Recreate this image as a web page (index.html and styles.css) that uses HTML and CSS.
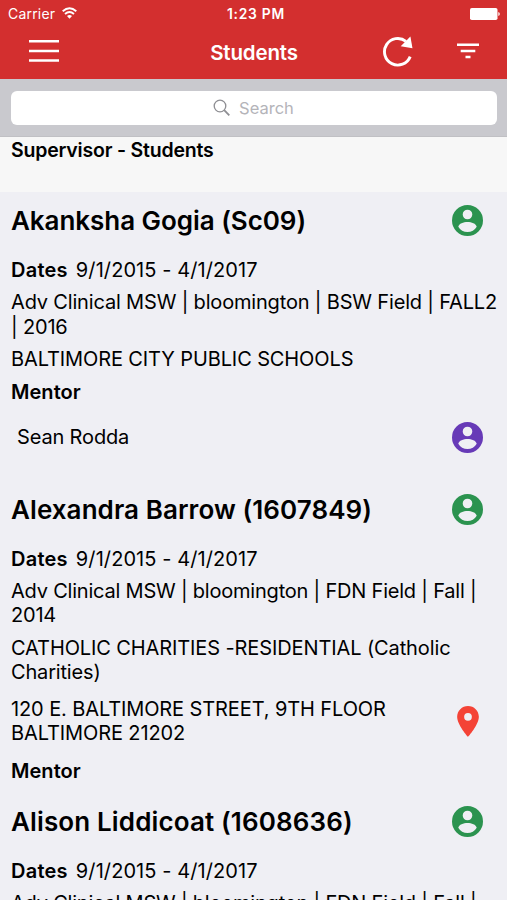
FILE: index.html
```html
<!DOCTYPE html>
<html lang="en">
<head>
<meta charset="utf-8">
<title>Students</title>
<link rel="stylesheet" href="styles.css">
</head>
<body>
<svg class="defs" aria-hidden="true">
  <symbol id="person" viewBox="0 0 31 31"><path fill-rule="evenodd" d="M15.500 0a15.500 15.500 0 1 1 0 31 15.500 15.500 0 0 1 0-31zM15.500 4.700a4.800 4.800 0 1 0 0 9.600 4.800 4.800 0 0 0 0-9.600zM6.300 21.700C8.200 25.200 11.600 27 15.500 27S22.800 25.200 24.700 21.700C24.100 18.400 19.500 16.900 15.500 16.900S6.900 18.400 6.300 21.700z"/></symbol>
  <symbol id="pin" viewBox="5 2 14 20"><path d="M12 2C8.130 2 5 5.130 5 9c0 5.250 7 13 7 13s7-7.750 7-13c0-3.870-3.130-7-7-7zm0 9.500a2.500 2.500 0 1 1 0-5 2.500 2.500 0 0 1 0 5z"/></symbol>
</svg>
<header class="top">
  <div class="status">
    <div class="carrier"><span class="carrier-name">Carrier</span>
      <svg class="wifi" viewBox="0 0 15 12"><path d="M0.700 4.300Q7.500-1.600 14.300 4.300M3 7Q7.500 3.200 12 7" fill="none" stroke="#fff" stroke-width="1.900"/><path d="M5 9Q7.500 7 10 9L7.500 11.700z" fill="#fff"/></svg>
    </div>
    <span class="clock">1:23 PM</span>
    <svg class="battery" viewBox="0 0 30 12"><rect width="27.500" height="12" rx="1.800" fill="#fff"/><path d="M28.300 4Q29.800 4.500 29.800 6T28.300 8z" fill="#fff"/></svg>
  </div>
  <nav class="bar">
    <svg class="menu" viewBox="0 0 30 24"><path d="M0 2.300h30M0 11.900h30M0 21.500h30" stroke="#fff" stroke-width="2.500"/></svg>
    <h1 class="title">Students</h1>
    <div class="actions">
      <svg class="refresh" viewBox="0 0 32 32"><path d="M28.200 21.600A13.300 13.300 0 1 1 24 6.300" fill="none" stroke="#fff" stroke-width="2.900"/><path d="M28.400 1.500L30.500 13.300 18.700 11.200z" fill="#fff"/></svg>
      <svg class="filter" viewBox="0 0 24 18"><path d="M1 2.800h22M4.700 9h14.600M9.500 15h5" stroke="#fff" stroke-width="2.400"/></svg>
    </div>
  </nav>
</header>
<div class="search">
  <div class="field">
    <svg class="glass" viewBox="0 0 18 18"><circle cx="7" cy="7" r="5.800" fill="none" stroke="#8e8e93" stroke-width="1.300"/><path d="M11.200 11.200L16.300 16.300" stroke="#8e8e93" stroke-width="1.800"/></svg>
    <span class="hint">Search</span>
  </div>
</div>
<h2 class="section"><span class="section-text">Supervisor - Students</span></h2>
<main class="list">
  <article class="card first">
    <div class="head"><h3 class="name n1">Akanksha Gogia (Sc09)</h3><svg class="icon green"><use href="#person"/></svg></div>
    <p class="line dates"><b>Dates</b><span>9/1/2015 - 4/1/2017</span></p>
    <p class="line">Adv Clinical MSW | bloomington | BSW Field | FALL2<br>| 2016</p>
    <p class="line caps">BALTIMORE CITY PUBLIC SCHOOLS</p>
    <p class="line"><b>Mentor</b></p>
    <div class="mentor"><span class="mentor-name">Sean Rodda</span><svg class="icon purple"><use href="#person"/></svg></div>
  </article>
  <article class="card compact">
    <div class="head"><h3 class="name n2">Alexandra Barrow (1607849)</h3><svg class="icon green"><use href="#person"/></svg></div>
    <p class="line dates"><b>Dates</b><span>9/1/2015 - 4/1/2017</span></p>
    <p class="line field-info">Adv Clinical MSW | bloomington | FDN Field | Fall |<br>2014</p>
    <p class="line"><span class="caps">CATHOLIC CHARITIES -RESIDENTIAL (Catholic</span><br>Charities)</p>
    <div class="address"><p class="line caps">120 E. BALTIMORE STREET, 9TH FLOOR<br>BALTIMORE 21202</p><svg class="pin"><use href="#pin"/></svg></div>
    <p class="line"><b>Mentor</b></p>
  </article>
  <article class="card">
    <div class="head"><h3 class="name n3">Alison Liddicoat (1608636)</h3><svg class="icon green"><use href="#person"/></svg></div>
    <p class="line dates"><b>Dates</b><span>9/1/2015 - 4/1/2017</span></p>
    <p class="line field-info">Adv Clinical MSW | bloomington | FDN Field | Fall |</p>
  </article>
</main>
</body>
</html>
```
FILE: styles.css
```css
* { box-sizing: border-box; }
body {
  margin: 0;
  height: 900px;
  overflow: hidden;
  background: #efeff4;
  color: #000;
  font-family: Inter, "Liberation Sans", sans-serif;
}
h1, h2, h3, p { margin: 0; }
svg { display: block; flex: none; }
.defs { display: none; }
.top { height: 79px; background: #d32f2f; color: #fff; }
.status {
  height: 27px;
  padding: 0 7px 0 8px;
  display: grid;
  grid-template-columns: 1fr auto 1fr;
  align-items: center;
  font-size: 14px;
}
.carrier { display: flex; align-items: center; gap: 6.500px; }
.carrier-name { letter-spacing: 0.200px; }
.wifi { width: 15px; height: 12px; margin-top: -2px; }
.clock { font-weight: 600; font-size: 13.800px; letter-spacing: 0.750px; margin-left: 4px; }
.battery { width: 30px; height: 12px; justify-self: end; }
.bar {
  height: 50px;
  padding: 0 27px 0 29px;
  display: grid;
  grid-template-columns: 1fr auto 1fr;
  align-items: center;
}
.menu { width: 30px; height: 24px; margin-top: -2px; }
.title { font-size: 20.500px; font-weight: 600; letter-spacing: -0.150px; margin-left: -1px; }
.actions { display: flex; justify-content: flex-end; align-items: center; gap: 42px; }
.refresh { width: 32px; height: 32px; margin-top: -2px; }
.filter { width: 24px; height: 18px; margin-top: -2px; }
.search {
  height: 58px;
  padding: 12px 10px 12px 11px;
  background: #c9c9ce;
  border-bottom: 1px solid #c0c0c4;
}
.field {
  height: 34px;
  border-radius: 6px;
  background: #fff;
  display: flex;
  justify-content: center;
  align-items: center;
  gap: 8px;
  padding-right: 1px;
}
.glass { width: 18px; height: 18px; }
.hint { color: #b4b4b9; font-size: 16.500px; }
.section {
  height: 55px;
  padding: 1px 11px;
  background: #f7f7f7;
  font-size: 19.500px;
  letter-spacing: -0.200px;
  line-height: 24px;
  font-weight: 600;
}
.card { padding: 0 0 10px 11px; }
.compact { padding-bottom: 0.800px; }
.head {
  height: 58px;
  margin-bottom: 8.500px;
  padding-right: 24px;
  display: flex;
  align-items: center;
  justify-content: space-between;
}
.first .head { height: 57px; margin-bottom: 9px; }
.name { font-size: 26px; font-weight: 600; white-space: nowrap; }
.n1 { letter-spacing: -0.050px; }
.n2 { letter-spacing: 0.080px; }
.n3 { letter-spacing: 0.130px; }
.icon { width: 31px; height: 31px; }
.green { fill: #2b934f; }
.purple { fill: #673ab7; }
.line {
  margin-bottom: 7.900px;
  font-size: 20px;
  letter-spacing: -0.170px;
  line-height: 24.500px;
  white-space: nowrap;
}
.line b { font-weight: 600; letter-spacing: 0.050px; }
.field-info { letter-spacing: -0.210px; }
.caps { letter-spacing: -0.110px; }
.dates { display: flex; gap: 8px; letter-spacing: 0.080px; }
.dates b { letter-spacing: 0.250px; }
.mentor {
  height: 50px;
  margin-bottom: 8px;
  padding: 0 24px 0 6px;
  display: flex;
  align-items: center;
  justify-content: space-between;
  font-size: 20px;
  letter-spacing: -0.150px;
}
.address {
  height: 57px;
  margin: 3px 0 9.500px;
  padding-right: 28px;
  display: flex;
  align-items: center;
  justify-content: space-between;
}
.address .line { margin: 0; }
.pin { width: 22px; height: 31px; fill: #f44336; }
```
